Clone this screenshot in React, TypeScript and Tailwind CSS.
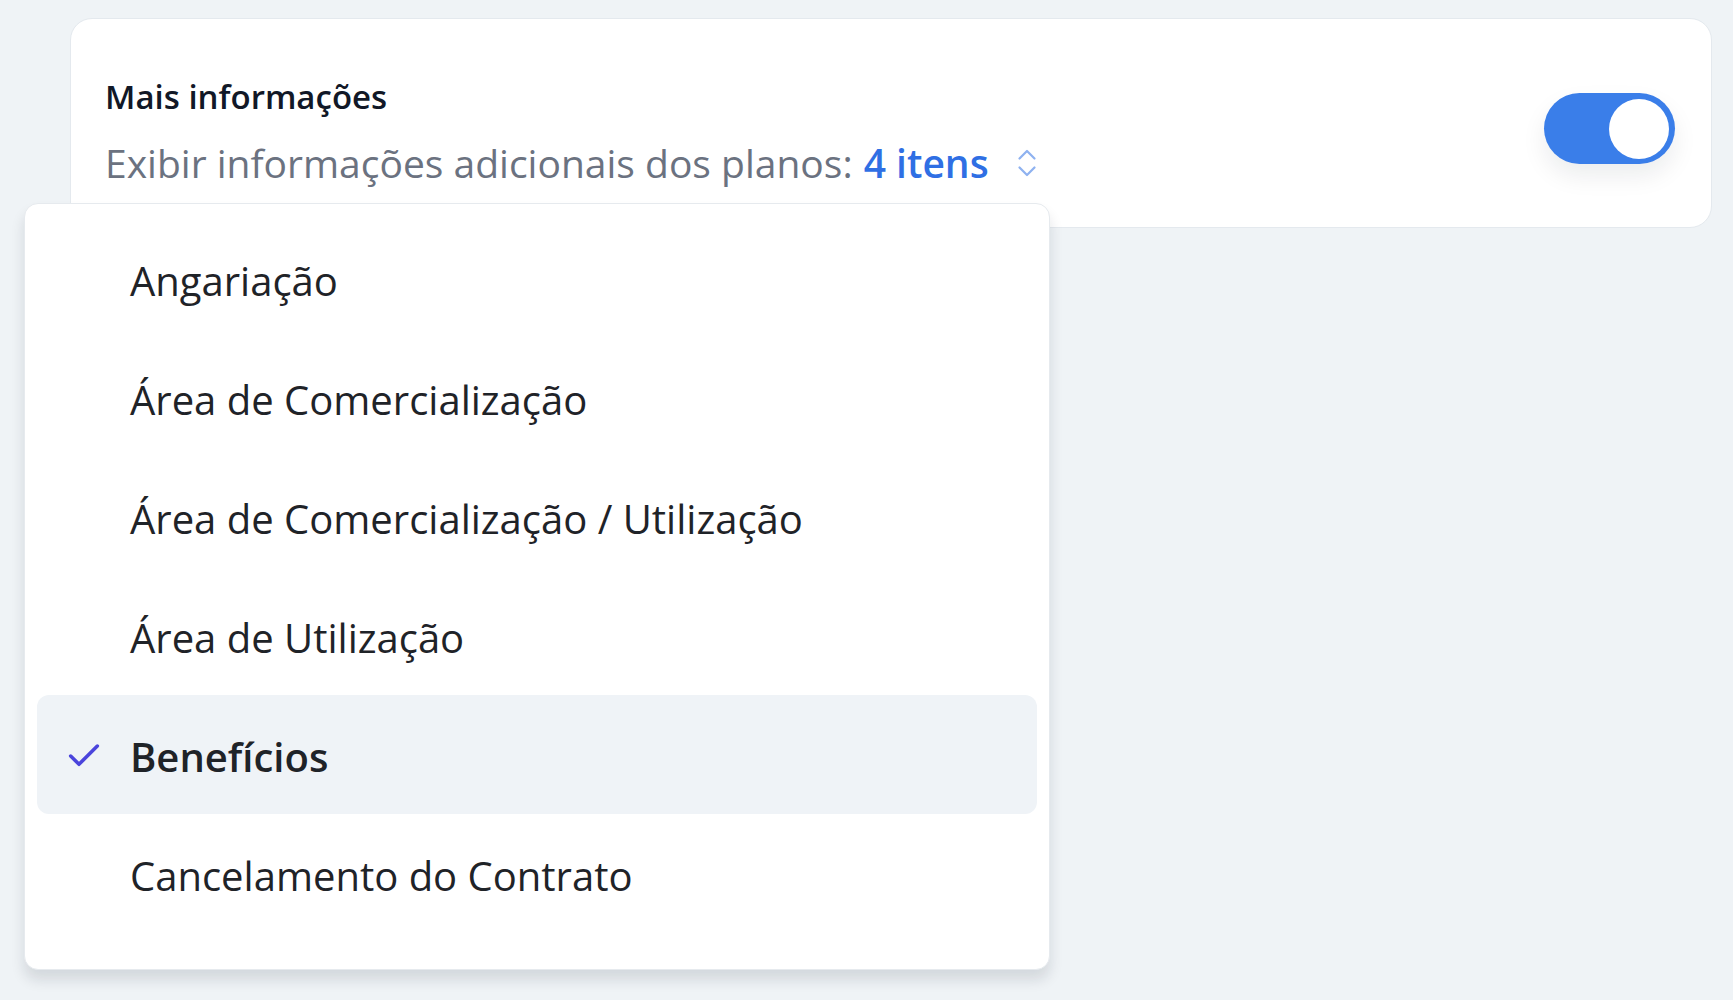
import React from "react";
import { Check, ChevronsUpDown } from "lucide-react";

const options = [
  { id: "angariacao", label: "Angariação", selected: false },
  { id: "area-com", label: "Área de Comercialização", selected: false },
  { id: "area-com-uti", label: "Área de Comercialização / Utilização", selected: false },
  { id: "area-uti", label: "Área de Utilização", selected: false },
  { id: "beneficios", label: "Benefícios", selected: true },
  { id: "cancelamento", label: "Cancelamento do Contrato", selected: false },
];

const Toggle = ({ on }: { on: boolean }) => (
  <button
    className={`mt-[11px] flex h-[71px] w-[131px] shrink-0 items-center rounded-full px-[6px] shadow-[0_12px_24px_rgba(15,23,42,0.08)] ${
      on ? "justify-end bg-[#3a7ee9]" : "justify-start bg-gray-300"
    }`}
  >
    <span className="block h-[60px] w-[60px] rounded-full bg-white" />
  </button>
);

const App = () => {
  return (
    <div
      className="min-h-screen w-full bg-[#eff3f6] pl-[70px] pr-[21px] pt-[18px]"
      style={{ fontFamily: '"Open Sans", "Noto Sans", sans-serif' }}
    >
      <div className="relative">
        <div className="flex h-[210px] items-center justify-between rounded-[22px] border border-[#e4e9ee] bg-white pl-[34px] pr-[36px]">
          <div className="flex flex-col self-start pt-[58px]">
            <h2 className="text-[33px] font-semibold leading-[40px] text-[#111827]">
              Mais informações
            </h2>
            <p className="mt-[22px] flex items-center text-[39px] leading-[48px] text-[#6b7280]">
              Exibir informações adicionais dos planos:
              <span className="ml-[11px] font-semibold text-[#2f6fe4]">4 itens</span>
              <ChevronsUpDown className="ml-[20px] h-[36px] w-[36px] text-[#8fb2f0]" strokeWidth={1.5} />
            </p>
          </div>
          <Toggle on />
        </div>

        <div className="absolute left-[-46px] top-[185px] w-[1026px] rounded-[14px] border border-[#e6eaee] bg-white px-[12px] pb-[36px] pt-[15px] shadow-[0_10px_14px_rgba(15,23,42,0.12)]">
          <ul className="flex flex-col">
            {options.map((opt) => (
              <li
                key={opt.id}
                className={`flex h-[119px] items-center rounded-[12px] ${
                  opt.selected ? "bg-[#eff3f7]" : ""
                }`}
              >
                <span className="flex w-[93px] shrink-0 items-center pl-[27px] pt-[2px]">
                  {opt.selected && (
                    <Check className="h-[40px] w-[40px] text-[#4a44dc]" strokeWidth={2.1} />
                  )}
                </span>
                <span
                  className={`pt-[4px] text-[40px] leading-[48px] text-[#1f2328] ${
                    opt.selected ? "font-semibold" : "font-normal"
                  }`}
                >
                  {opt.label}
                </span>
              </li>
            ))}
          </ul>
        </div>
      </div>
    </div>
  );
};

export default App;
